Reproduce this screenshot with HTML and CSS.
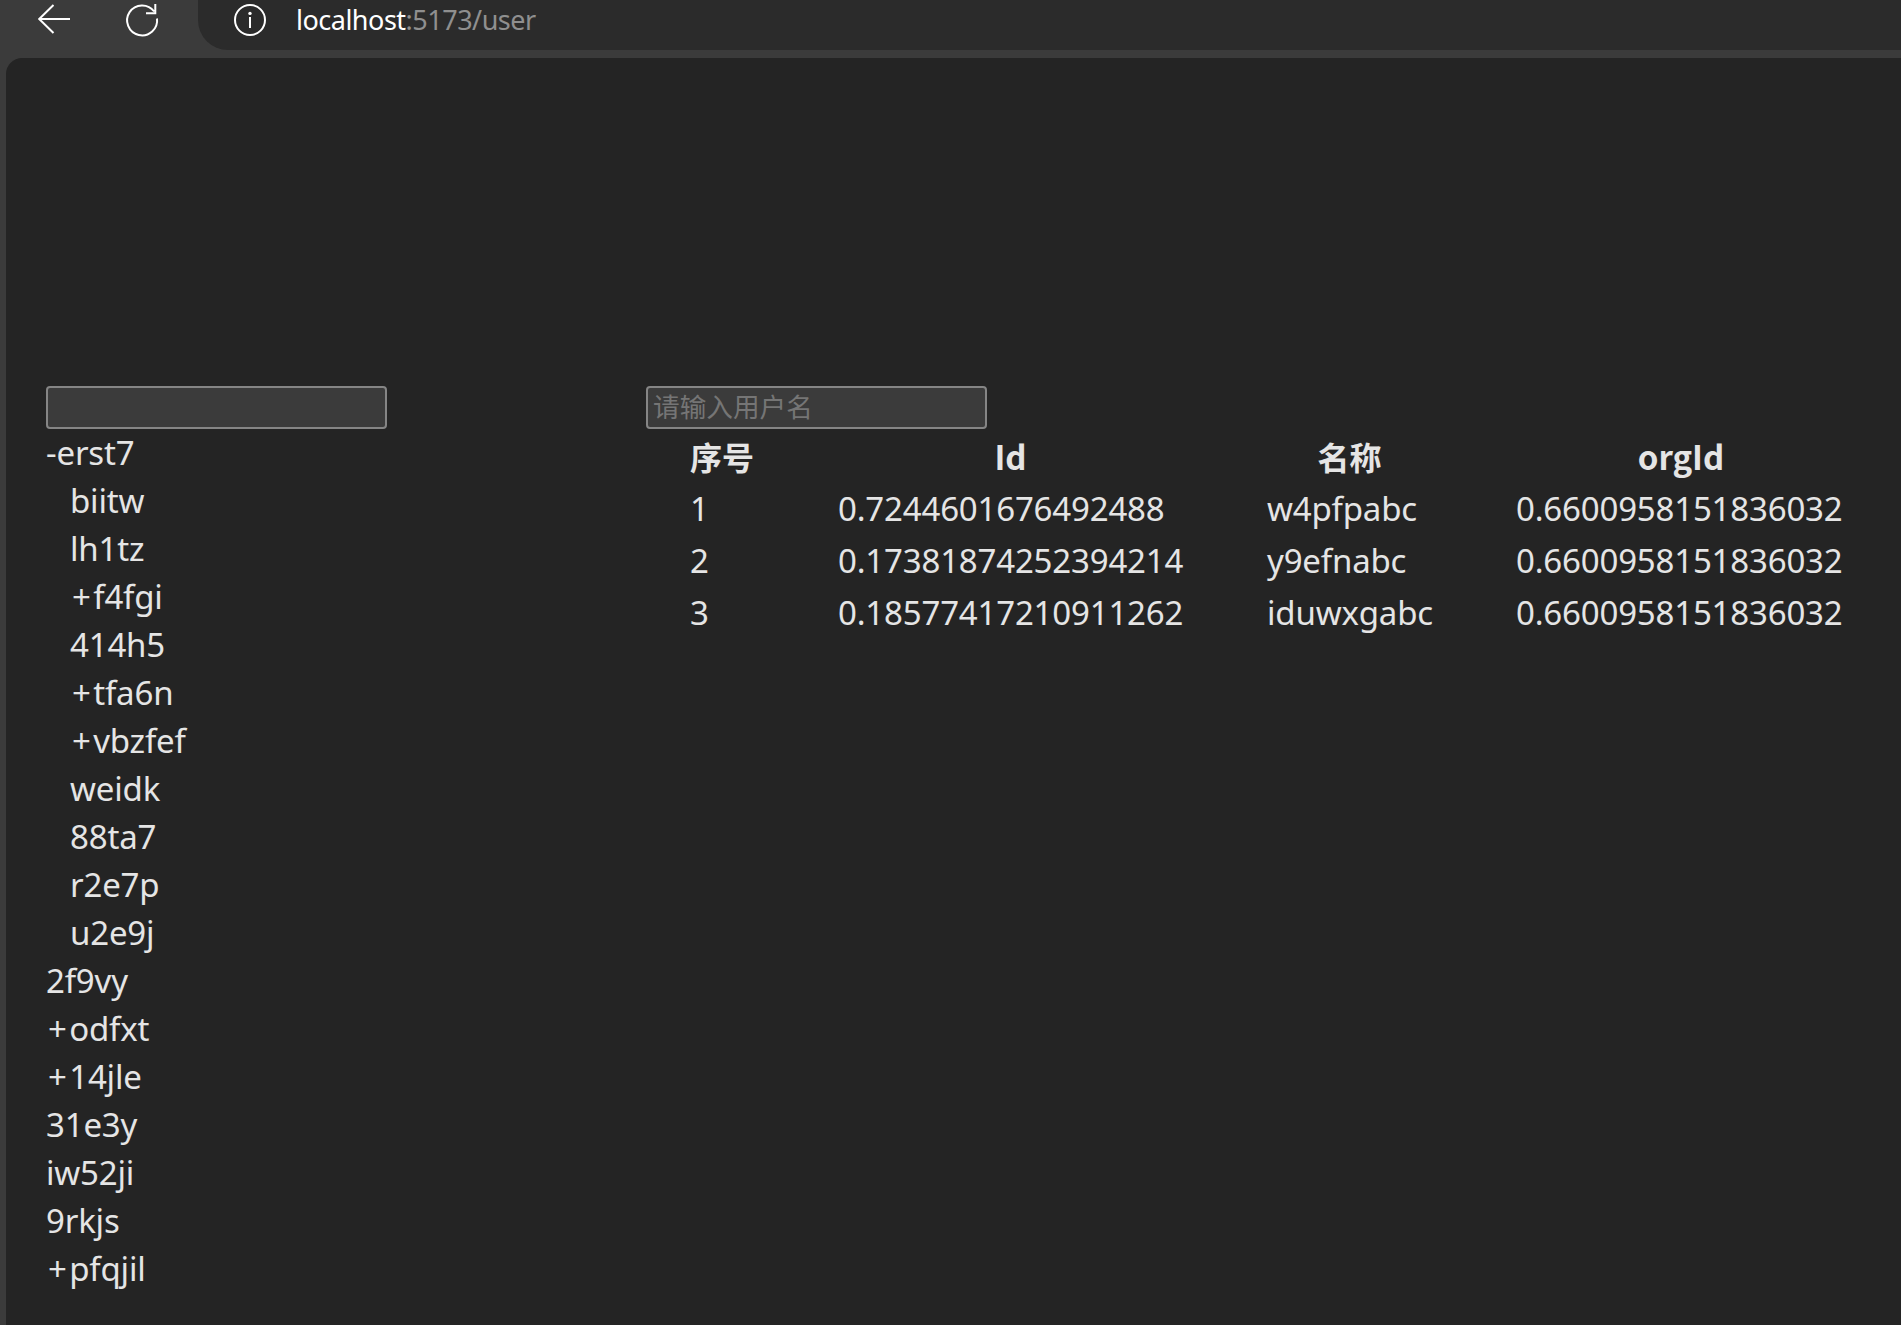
FILE: index.html
```html
<!DOCTYPE html>
<html lang="zh-CN">
<head>
<meta charset="UTF-8">
<title>user</title>
<link rel="stylesheet" href="styles.css">
</head>
<body>
<header class="toolbar">
  <svg class="icon back" viewBox="0 0 32 32"><path d="M15.5 2 1.2 16 15.5 30M1.2 16H32"/></svg>
  <svg class="icon reload" viewBox="0 0 32 32"><path d="M31 14.5A15 15 0 1 1 28.2 7.5M29.3 0V9.2H20"/></svg>
  <div class="address">
    <svg class="icon" viewBox="0 0 32 32"><circle cx="16" cy="16" r="15"/><path d="M16 13V24"/><circle class="dot" cx="16" cy="9.4" r="1.7"/></svg>
    <div class="url"><span class="host">localhost</span>:5173/user</div>
  </div>
</header>
<main class="page">
  <aside class="sidebar">
    <input class="field" type="text">
    <ul class="tree">
      <li>-erst7
        <ul class="branch">
          <li>biitw</li>
          <li>lh1tz</li>
          <li><span class="sign">+</span>f4fgi</li>
          <li>414h5</li>
          <li><span class="sign">+</span>tfa6n</li>
          <li><span class="sign">+</span>vbzfef</li>
          <li>weidk</li>
          <li>88ta7</li>
          <li>r2e7p</li>
          <li>u2e9j</li>
        </ul>
      </li>
      <li>2f9vy</li>
      <li><span class="sign">+</span>odfxt</li>
      <li><span class="sign">+</span>14jle</li>
      <li>31e3y</li>
      <li>iw52ji</li>
      <li>9rkjs</li>
      <li><span class="sign">+</span>pfqjil</li>
    </ul>
  </aside>
  <section class="content">
    <input class="field" type="text" placeholder="请输入用户名">
    <table class="users">
      <colgroup><col class="c-no"><col class="c-id"><col class="c-name"><col class="c-org"></colgroup>
      <thead>
        <tr><th>序号</th><th class="latin">Id</th><th>名称</th><th class="latin">orgId</th></tr>
      </thead>
      <tbody>
        <tr><td>1</td><td>0.7244601676492488</td><td>w4pfpabc</td><td>0.6600958151836032</td></tr>
        <tr><td>2</td><td>0.17381874252394214</td><td>y9efnabc</td><td>0.6600958151836032</td></tr>
        <tr><td>3</td><td>0.18577417210911262</td><td>iduwxgabc</td><td>0.6600958151836032</td></tr>
      </tbody>
    </table>
  </section>
</main>
</body>
</html>
```

FILE: styles.css
```css
* { box-sizing: border-box; }

body {
  margin: 0;
  height: 1325px;
  overflow: hidden;
  display: flex;
  flex-direction: column;
  background: #3b3b3b;
  color: #e5e5e5;
  font: 33px/48px "Noto Sans", "Noto Sans CJK SC", sans-serif;
  letter-spacing: -0.18px;
}

.toolbar {
  display: flex;
  height: 58px;
  flex: none;
  padding-left: 38px;
}

.icon {
  width: 32px;
  height: 32px;
  margin-top: 4px;
  flex: none;
  fill: none;
  stroke: #fff;
  stroke-width: 2;
  overflow: visible;
}

.back { margin-top: 3px; }
.reload { margin-left: 56px; }
.icon .dot { fill: #fff; stroke: none; }

.address {
  display: flex;
  flex: 1;
  height: 50px;
  margin-left: 40px;
  padding-left: 36px;
  background: #2b2b2b;
  border-bottom-left-radius: 30px;
}

.url {
  margin-left: 30px;
  line-height: 40px;
  font-size: 27px;
  letter-spacing: -0.5px;
  color: #8f8f8f;
}

.host { color: #fff; }

.page {
  flex: 1;
  display: flex;
  padding: 328px 0 0 40px;
  margin-left: 6px;
  background: #242424;
  border-top-left-radius: 16px;
}

.sidebar { width: 600px; flex: none; }

.field {
  display: block;
  width: 341px;
  height: 43px;
  padding: 0 5px 4px;
  border: 2px solid #858585;
  border-radius: 4px;
  background: #3b3b3b;
  color: #fff;
  outline: none;
  font: 26.667px "Noto Sans CJK SC", sans-serif;
}

.field::placeholder { color: #757575; }

.tree, .branch { margin: 0; padding: 0; list-style: none; }
.branch { padding-left: 24px; }
.sign { margin: 0 2.5px 0 2px; }

.users {
  width: 1244px;
  table-layout: fixed;
  border-spacing: 4px;
}

.users th, .users td { height: 48px; padding: 0 40px; white-space: nowrap; text-align: left; }
.users th {
  padding-bottom: 2px;
  line-height: 46px;
  text-align: center;
  font: 700 32px/46px "Noto Sans CJK SC", sans-serif;
  letter-spacing: 0;
}
.users .latin { font-size: 33px; }
.c-no { width: 144px; }
.c-id { width: 425px; }
.c-name { width: 245px; }
.c-org { width: 410px; }
```
